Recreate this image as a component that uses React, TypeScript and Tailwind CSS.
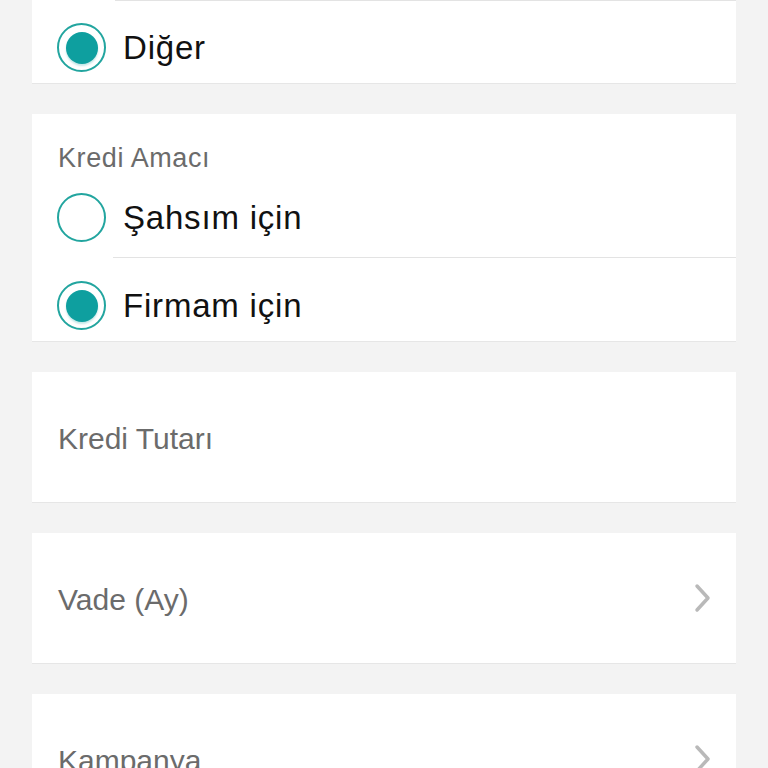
import React from "react";

const font = { fontFamily: '"Liberation Sans", Arial, sans-serif' };

function Radio({ checked }: { checked: boolean }) {
  return (
    <div className="w-[49px] h-[49px] rounded-full border-[2.5px] border-[#22a59f] bg-white flex items-center justify-center shrink-0">
      {checked && (
        <div className="w-[32px] h-[32px] rounded-full bg-[#0e9f9f] shadow-[0_2px_2px_rgba(14,159,159,0.25)]" />
      )}
    </div>
  );
}

function OptionRow({ label, checked, pt, h }: { label: string; checked: boolean; pt: string; h: string }) {
  return (
    <div className={`flex items-start pl-[25px] ${pt} ${h}`}>
      <div className="flex items-center gap-[17px]">
        <Radio checked={checked} />
        <span className="text-[33px] leading-[40px] tracking-[0.8px] text-[#111111]">{label}</span>
      </div>
    </div>
  );
}

function Chevron() {
  return (
    <svg width="20" height="30" viewBox="0 0 20 30" className="shrink-0">
      <path d="M4 3 L15 15 L4 27" fill="none" stroke="#b9b9b9" strokeWidth="3.5" strokeLinecap="round" strokeLinejoin="round" />
    </svg>
  );
}

function FieldCard({ label, chevron, mt = "mt-[30px]" }: { label: string; chevron?: boolean; mt?: string }) {
  return (
    <div className={`${mt} bg-white border-b border-[#e6e6e6]`}>
      <div className="h-[130px] flex items-center justify-between pl-[26px] pr-[23px]">
        <span className="text-[30px] leading-[36px] text-[#6b6b6b] mt-[4px]">{label}</span>
        {chevron && <Chevron />}
      </div>
    </div>
  );
}

export default function App() {
  return (
    <div className="h-[768px] overflow-hidden bg-[#f3f3f3] px-[32px]" style={font}>
      {/* Card 1 */}
      <div className="bg-white border-b border-[#e6e6e6]">
        <div className="ml-[83px] h-px bg-[#e3e3e3]" />
        <OptionRow label="Diğer" checked pt="pt-[22px]" h="h-[82px]" />
      </div>

      {/* Card 2 */}
      <div className="mt-[30px] bg-white border-b border-[#e6e6e6]">
        <div className="pt-[29px] pl-[26px] text-[27px] leading-[30px] tracking-[0.6px] text-[#6b6b6b]">Kredi Amacı</div>
        <OptionRow label="Şahsım için" checked={false} pt="pt-[20px]" h="h-[84px]" />
        <div className="ml-[81px] h-px bg-[#e3e3e3]" />
        <OptionRow label="Firmam için" checked pt="pt-[23px]" h="h-[83px]" />
      </div>

      <FieldCard label="Kredi Tutarı" />
      <FieldCard label="Vade (Ay)" chevron />
      <FieldCard label="Kampanya" chevron />
    </div>
  );
}
